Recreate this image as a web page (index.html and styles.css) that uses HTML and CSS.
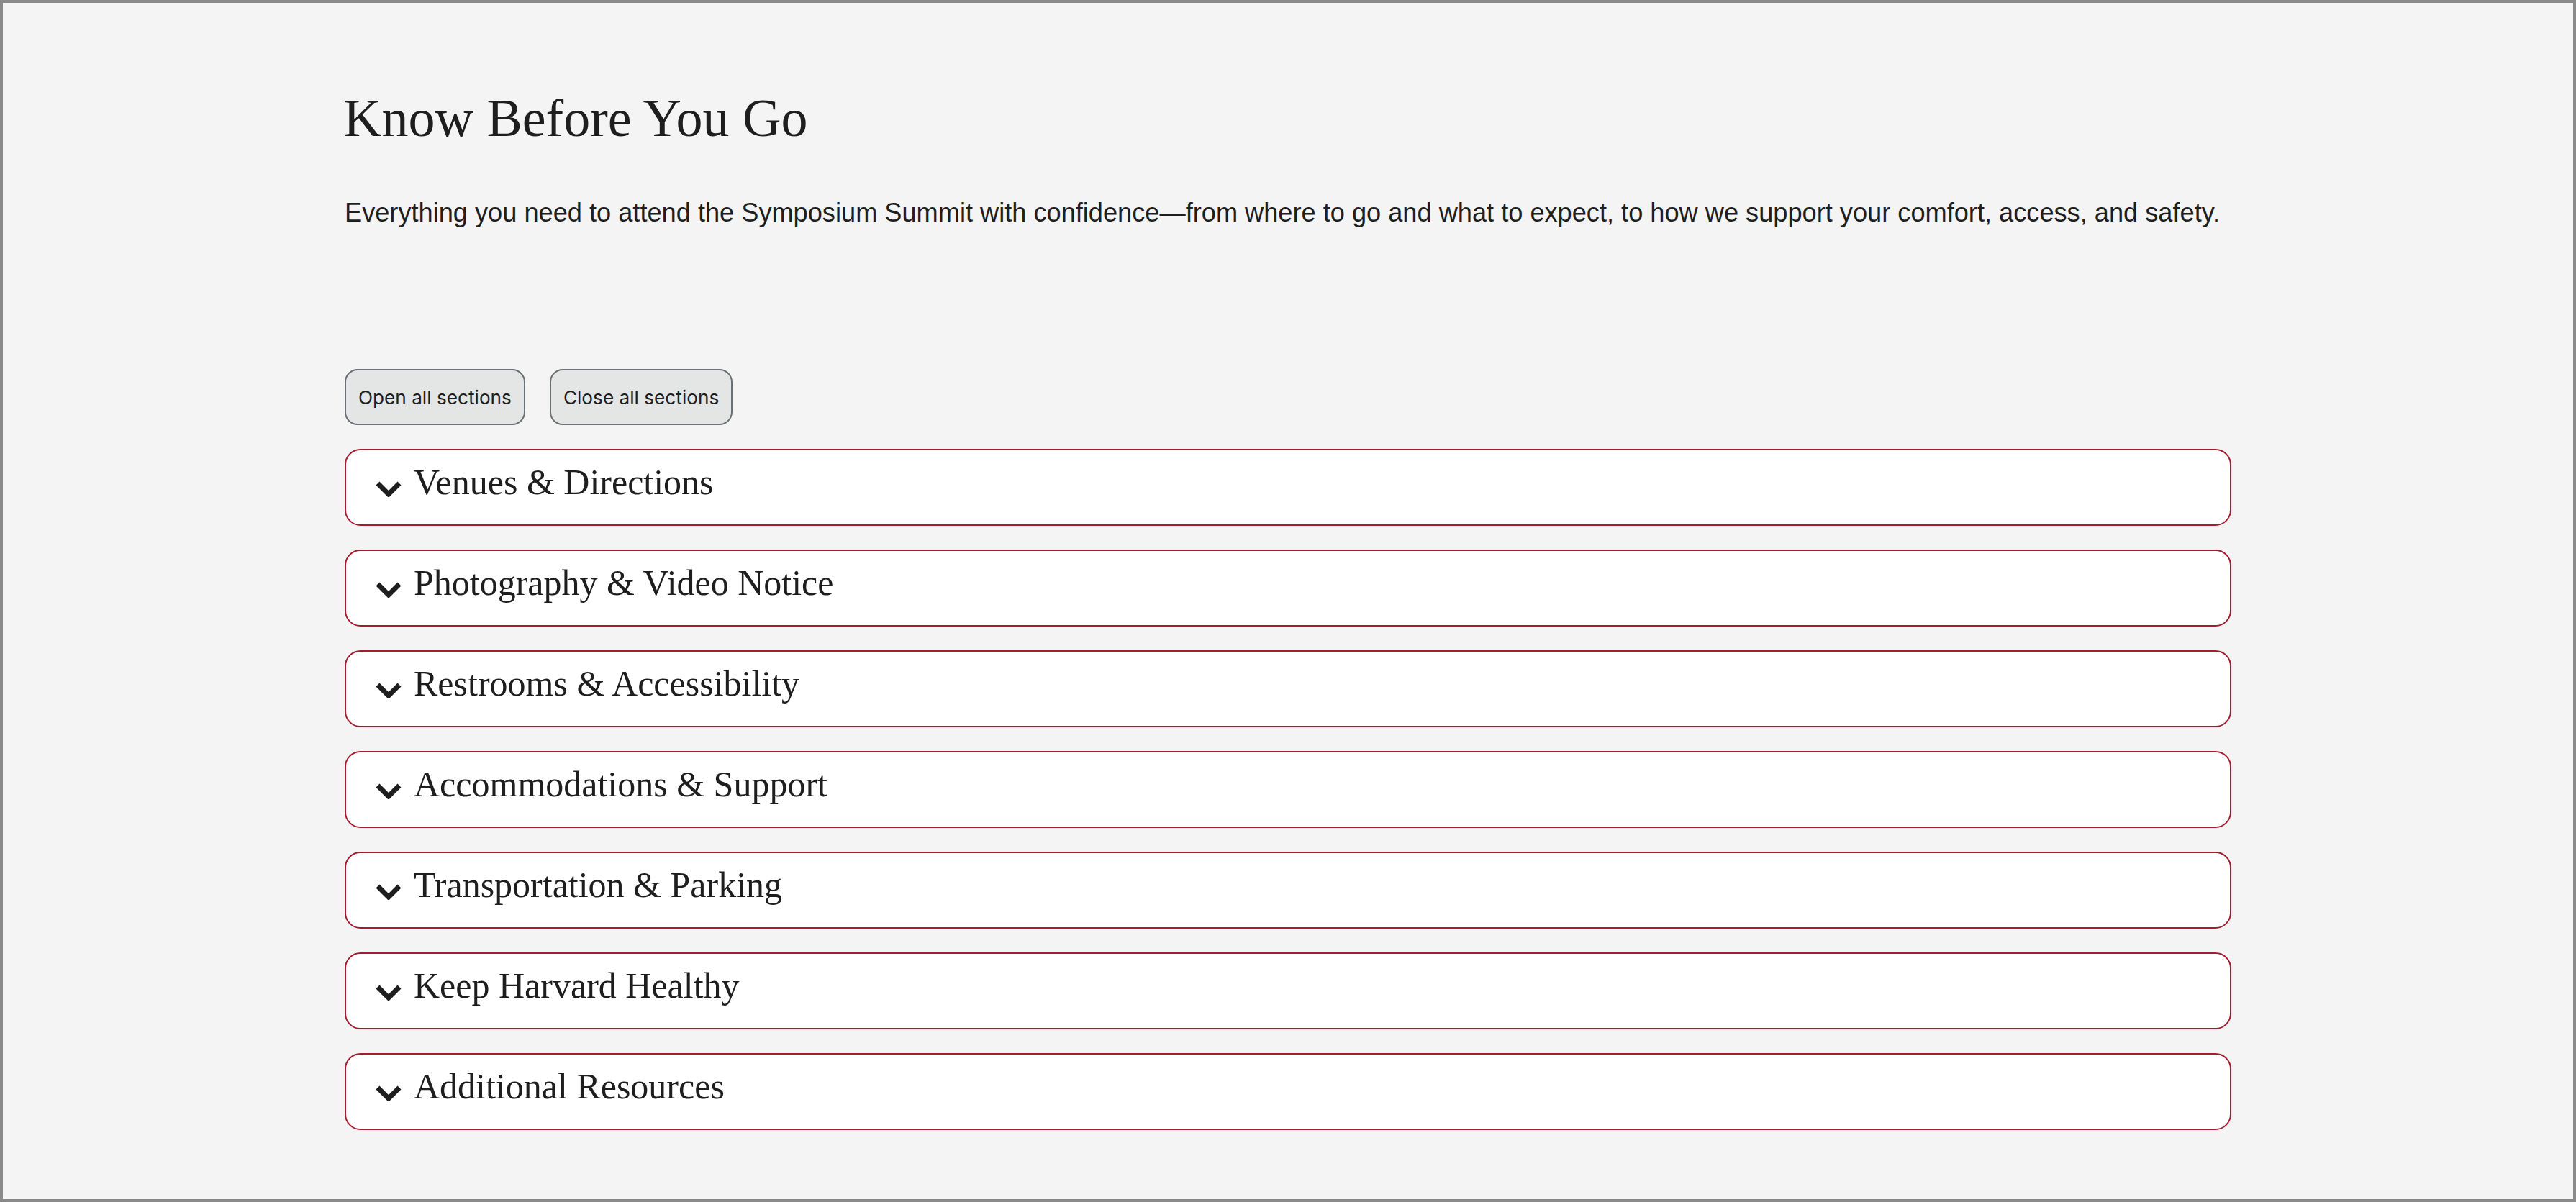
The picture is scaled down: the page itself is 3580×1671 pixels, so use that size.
FILE: index.html
```html
<!DOCTYPE html>
<html lang="en">
<head>
    <meta charset="UTF-8">
    <meta name="viewport" content="width=device-width, initial-scale=1.0">
    <title>Know Before You Go</title>
    <link rel="stylesheet" href="styles.css">
</head>
<body>
    <div class="page">
        <div class="container">
            <h1>Know Before You Go</h1>
            <p class="intro">Everything you need to attend the Symposium Summit with confidence—from where to go and what to expect, to how we support your comfort, access, and safety.</p>

            <div class="controls">
                <button type="button" id="openAll">Open all sections</button>
                <button type="button" id="closeAll">Close all sections</button>
            </div>

            <div class="accordion">
                <details class="section">
                    <summary>
                        <svg class="chevron" viewBox="0 0 36 22" width="36" height="22"><polyline points="3,3 18,18 33,3" /></svg>
                        <span>Venues &amp; Directions</span>
                    </summary>
                </details>
                <details class="section">
                    <summary>
                        <svg class="chevron" viewBox="0 0 36 22" width="36" height="22"><polyline points="3,3 18,18 33,3" /></svg>
                        <span>Photography &amp; Video Notice</span>
                    </summary>
                </details>
                <details class="section">
                    <summary>
                        <svg class="chevron" viewBox="0 0 36 22" width="36" height="22"><polyline points="3,3 18,18 33,3" /></svg>
                        <span>Restrooms &amp; Accessibility</span>
                    </summary>
                </details>
                <details class="section">
                    <summary>
                        <svg class="chevron" viewBox="0 0 36 22" width="36" height="22"><polyline points="3,3 18,18 33,3" /></svg>
                        <span>Accommodations &amp; Support</span>
                    </summary>
                </details>
                <details class="section">
                    <summary>
                        <svg class="chevron" viewBox="0 0 36 22" width="36" height="22"><polyline points="3,3 18,18 33,3" /></svg>
                        <span>Transportation &amp; Parking</span>
                    </summary>
                </details>
                <details class="section">
                    <summary>
                        <svg class="chevron" viewBox="0 0 36 22" width="36" height="22"><polyline points="3,3 18,18 33,3" /></svg>
                        <span>Keep Harvard Healthy</span>
                    </summary>
                </details>
                <details class="section">
                    <summary>
                        <svg class="chevron" viewBox="0 0 36 22" width="36" height="22"><polyline points="3,3 18,18 33,3" /></svg>
                        <span>Additional Resources</span>
                    </summary>
                </details>
            </div>
        </div>
    </div>
</body>
</html>
```

FILE: styles.css
```css
body {
    margin: 0;
    padding: 0;
    font-family: Inter, 'Liberation Sans', sans-serif;
    color: #1e1e1e;
}
.page {
    box-sizing: border-box;
    height: 1671px;
    border: 4px solid #8a8a8a;
    background-color: #f3f4f3;
    padding-top: 119px;
}
.container {
    width: 2622px;
    margin: 0 auto;
}
h1 {
    font-family: 'Liberation Serif', serif;
    font-weight: normal;
    font-size: 74px;
    line-height: 83px;
    margin: 0 0 0 -2px;
}
.intro {
    font-family: 'Liberation Sans', Arial, sans-serif;
    font-size: 36.2px;
    line-height: 51px;
    margin: 64px 0 0;
    white-space: nowrap;
}
.controls {
    display: flex;
    gap: 34px;
    margin-top: 192px;
}
.controls button {
    box-sizing: border-box;
    height: 78px;
    padding: 0 17px;
    font-family: Inter, 'Liberation Sans', sans-serif;
    font-size: 26.2px;
    color: #1e1e1e;
    background-color: #e4e5e5;
    border: 2px solid #6b7075;
    border-radius: 18px;
    cursor: pointer;
}
.accordion {
    display: flex;
    flex-direction: column;
    gap: 33px;
    margin-top: 33px;
}
.section {
    background-color: white;
    border: 2px solid #a51c30;
    border-radius: 22px;
}
.section summary {
    list-style: none;
    display: flex;
    align-items: center;
    gap: 17px;
    padding: 16px 40px 31px 41px;
    font-family: 'Liberation Serif', serif;
    font-size: 50px;
    line-height: 56px;
    cursor: pointer;
}
.section summary::-webkit-details-marker {
    display: none;
}
.chevron {
    flex: none;
    margin-top: 20px;
}
.chevron polyline {
    fill: none;
    stroke: #1e1e1e;
    stroke-width: 7;
}
```
